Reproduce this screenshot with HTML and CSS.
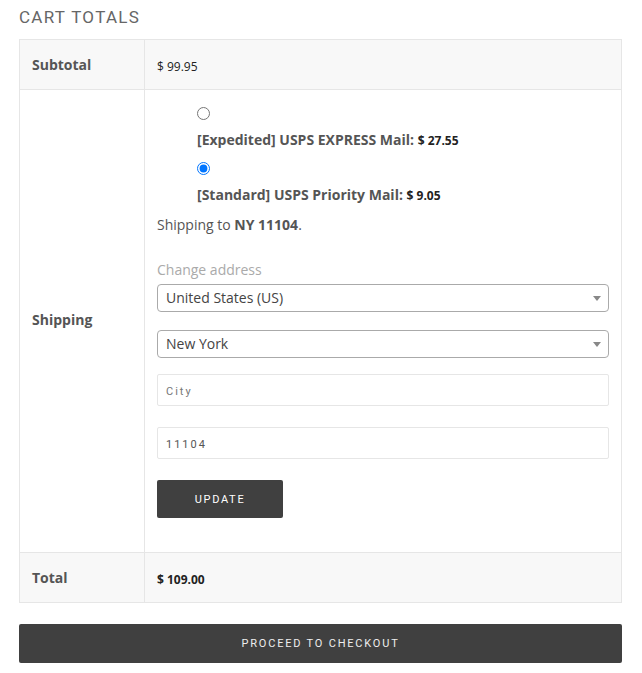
FILE: index.html
```html
<!DOCTYPE html>
<html>
<head>
<meta charset="utf-8">
<link rel="stylesheet" href="styles.css">
</head>
<body>
<div class="cart-totals">
  <h2 class="title">Cart totals</h2>
  <table class="totals">
    <tr class="row-shade">
      <th class="label">Subtotal</th>
      <td class="value"><span class="amount">$ 99.95</span></td>
    </tr>
    <tr class="row-ship">
      <th class="label">Shipping</th>
      <td class="value ship-cell">
        <ul class="methods">
          <li class="method">
            <input class="radio" type="radio" name="ship">
            <label class="method-label">[Expedited] USPS EXPRESS Mail: <span class="price">$ 27.55</span></label>
          </li>
          <li class="method">
            <input class="radio" type="radio" name="ship" checked>
            <label class="method-label">[Standard] USPS Priority Mail: <span class="price">$ 9.05</span></label>
          </li>
        </ul>
        <p class="dest">Shipping to <strong>NY 11104</strong>.</p>
        <p class="change">Change address</p>
        <div class="select">United States (US)<span class="arrow"></span></div>
        <div class="select second">New York<span class="arrow"></span></div>
        <div class="field first-field"><span class="placeholder">City</span></div>
        <div class="field"><span class="filled">11104</span></div>
        <button class="btn update">Update</button>
      </td>
    </tr>
    <tr class="row-shade">
      <th class="label">Total</th>
      <td class="value"><strong class="amount">$ 109.00</strong></td>
    </tr>
  </table>
  <button class="btn checkout">Proceed to checkout</button>
</div>
</body>
</html>
```
FILE: styles.css
```css
html, body {
  margin: 0;
  padding: 0;
  background: #fff;
}
body {
  font-family: "Open Sans", "Liberation Sans", sans-serif;
  color: #555;
}
.cart-totals {
  padding: 6px 20px 0 19px;
}
.title {
  margin: 0 0 11px;
  font-family: Roboto, "Liberation Sans", sans-serif;
  font-weight: 400;
  font-size: 17px;
  line-height: 22px;
  letter-spacing: 1.3px;
  text-transform: uppercase;
  color: #666;
}
.totals {
  width: 603px;
  border-collapse: collapse;
  border: 1px solid #e6e6e6;
}
.totals th, .totals td {
  border: 1px solid #e6e6e6;
  vertical-align: middle;
  text-align: left;
}
.row-shade th, .row-shade td {
  background: #f8f8f8;
  height: 49px;
  padding: 0 12px;
}
.label {
  width: 100px;
  font-size: 14px;
  font-weight: 700;
  color: #555;
}
.row-ship .label {
  padding: 0 12px 4px;
  background: #fff;
}
.amount {
  font-size: 12px;
  color: #222;
}
.ship-cell {
  padding: 17px 12px 34px;
  background: #fff;
}
.methods {
  list-style: none;
  margin: 0;
  padding: 0 0 0 40px;
}
.method {
  margin: 0 0 9px;
}
.method:last-child {
  margin-bottom: 0;
}
.radio {
  display: block;
  margin: 0;
  width: 13px;
  height: 13px;
}
.method-label {
  display: block;
  margin-top: 8px;
  font-size: 14px;
  line-height: 24px;
  font-weight: 700;
  color: #555;
}
.price {
  font-size: 12px;
  color: #222;
}
.dest {
  margin: 5px 0 0;
  font-size: 14px;
  line-height: 24px;
  color: #555;
}
.dest strong {
  font-weight: 700;
}
.change {
  margin: 21px 0 2px;
  font-size: 14px;
  line-height: 24px;
  color: #aaa;
}
.select {
  position: relative;
  height: 26px;
  border: 1px solid #aaa;
  border-radius: 4px;
  padding: 0 8px;
  font-size: 14px;
  line-height: 26px;
  color: #444;
}
.select.second {
  margin-top: 18px;
}
.arrow {
  position: absolute;
  right: 7px;
  top: 11px;
  width: 0;
  height: 0;
  border-left: 4px solid transparent;
  border-right: 4px solid transparent;
  border-top: 5px solid #888;
}
.field {
  height: 28px;
  margin-top: 21px;
  border: 1px solid #e6e6e6;
  border-radius: 2px;
  padding: 2px 8px 0;
  font-family: Roboto, "Liberation Sans", sans-serif;
  font-size: 11px;
  line-height: 30px;
  letter-spacing: 2px;
}
.field.first-field {
  margin-top: 16px;
}
.placeholder {
  color: #777;
}
.filled {
  color: #555;
}
.btn {
  display: block;
  border: 0;
  border-radius: 2px;
  background: #404040;
  color: #fff;
  font-family: Roboto, "Liberation Sans", sans-serif;
  font-weight: 400;
  text-transform: uppercase;
  cursor: pointer;
  padding: 0;
}
.update {
  margin-top: 21px;
  width: 126px;
  height: 38px;
  font-size: 11px;
  letter-spacing: 1.7px;
}
.checkout {
  margin-top: 21px;
  width: 603px;
  height: 39px;
  font-size: 11px;
  letter-spacing: 1.8px;
  color: #eee;
}
```
